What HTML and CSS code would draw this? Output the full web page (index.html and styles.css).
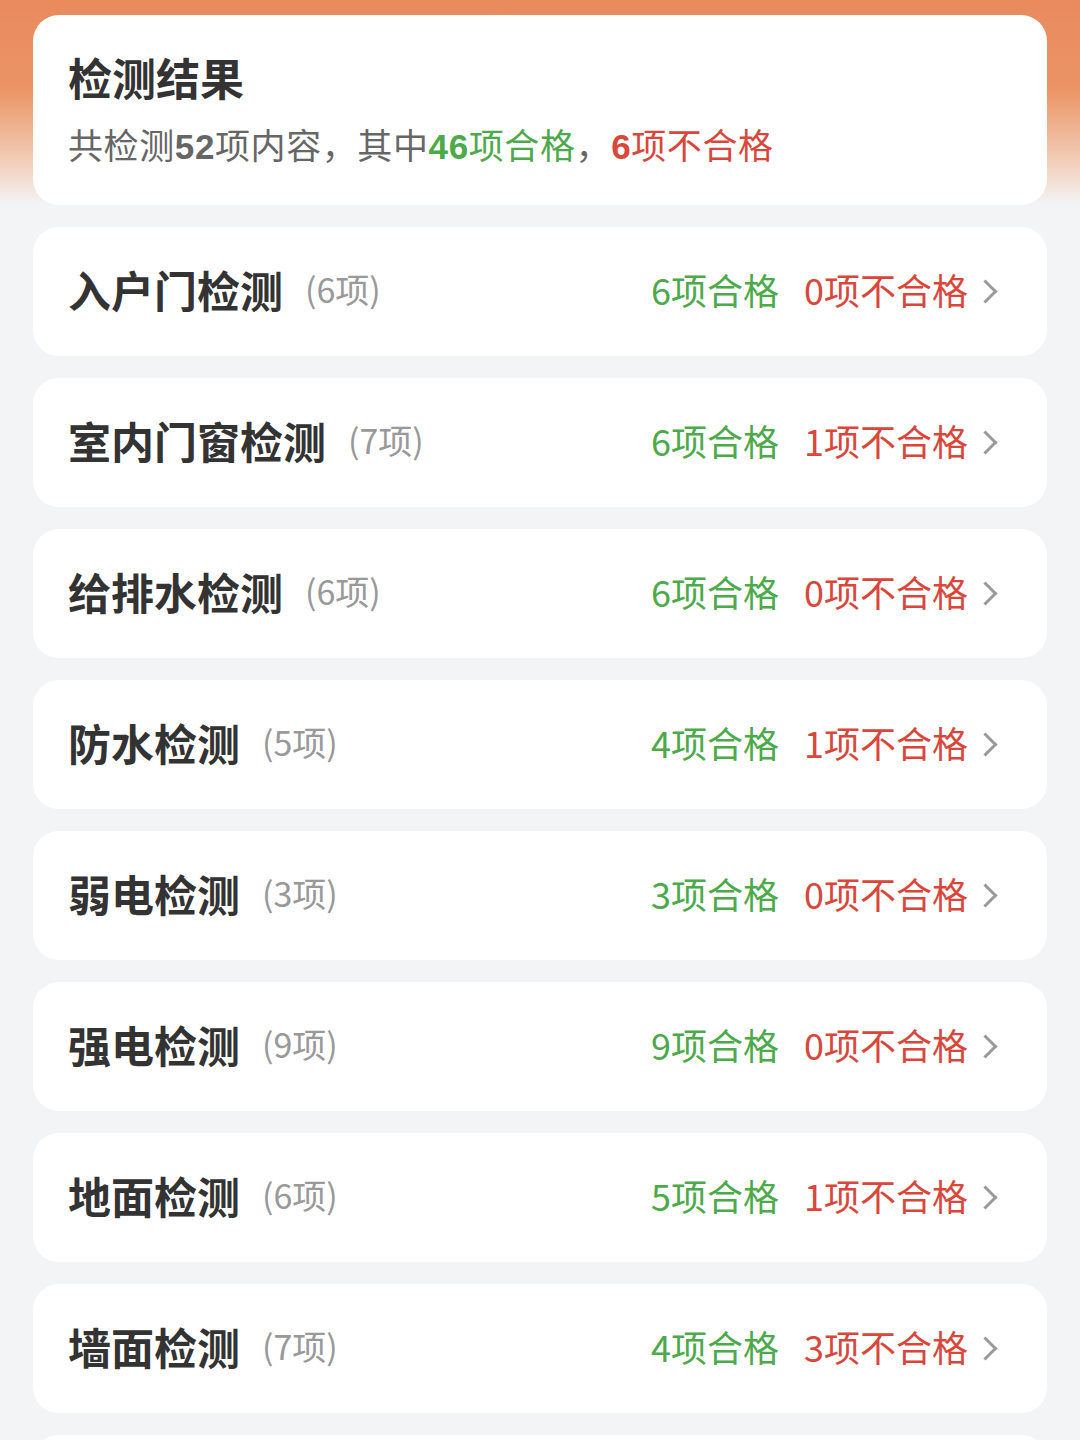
FILE: index.html
```html
<!DOCTYPE html>
<html>
<head>
	<meta charset="utf-8">
	<title>检测结果</title>
	<link rel="stylesheet" href="styles.css">
</head>
<body>
	<div class="page">
		<div class="summary">
			<h1 class="summary-title">检测结果</h1>
			<p class="summary-text">共检测<b>52</b>项内容，其中<span class="ok"><b>46</b>项合格</span>，<span class="bad"><b>6</b>项不合格</span></p>
		</div>

		<div class="item">
			<div class="item-name">入户门检测<span class="item-count">(6项)</span></div>
			<div class="item-result"><span class="ok">6项合格</span><span class="bad">0项不合格</span><span class="arrow"></span></div>
		</div>
		<div class="item">
			<div class="item-name">室内门窗检测<span class="item-count">(7项)</span></div>
			<div class="item-result"><span class="ok">6项合格</span><span class="bad">1项不合格</span><span class="arrow"></span></div>
		</div>
		<div class="item">
			<div class="item-name">给排水检测<span class="item-count">(6项)</span></div>
			<div class="item-result"><span class="ok">6项合格</span><span class="bad">0项不合格</span><span class="arrow"></span></div>
		</div>
		<div class="item">
			<div class="item-name">防水检测<span class="item-count">(5项)</span></div>
			<div class="item-result"><span class="ok">4项合格</span><span class="bad">1项不合格</span><span class="arrow"></span></div>
		</div>
		<div class="item">
			<div class="item-name">弱电检测<span class="item-count">(3项)</span></div>
			<div class="item-result"><span class="ok">3项合格</span><span class="bad">0项不合格</span><span class="arrow"></span></div>
		</div>
		<div class="item">
			<div class="item-name">强电检测<span class="item-count">(9项)</span></div>
			<div class="item-result"><span class="ok">9项合格</span><span class="bad">0项不合格</span><span class="arrow"></span></div>
		</div>
		<div class="item">
			<div class="item-name">地面检测<span class="item-count">(6项)</span></div>
			<div class="item-result"><span class="ok">5项合格</span><span class="bad">1项不合格</span><span class="arrow"></span></div>
		</div>
		<div class="item">
			<div class="item-name">墙面检测<span class="item-count">(7项)</span></div>
			<div class="item-result"><span class="ok">4项合格</span><span class="bad">3项不合格</span><span class="arrow"></span></div>
		</div>
		<!-- next card only peeks in at the bottom edge -->
		<div class="item"></div>
	</div>
</body>
</html>
```

FILE: styles.css
```css
*{
	padding: 0;
	margin: 0;
	box-sizing: border-box;
}
html{
	background-color: #f3f4f6;
}
body{
	font-family: "Noto Sans CJK SC", "Noto Sans", sans-serif;
	background: linear-gradient(180deg, #e98a5d 0, #ec9466 90px, #f2cdb6 160px, #f3f4f6 205px) no-repeat;
	background-color: #f3f4f6;
	height: 1440px;
	overflow: hidden;
}
.page{
	padding: 15px 33px 0;
	display: flex;
	flex-direction: column;
	gap: 22px;
}
.summary{
	background-color: #fff;
	border-radius: 26px;
	height: 190px;
	padding: 30px 35px 0;
}
.summary-title{
	font-size: 44px;
	font-weight: bold;
	color: #333;
	line-height: 64px;
}
.summary-text{
	margin-top: 3px;
	font-size: 35px;
	letter-spacing: 0.6px;
	color: #666;
	line-height: 64px;
}
.summary-text b{
	font-family: "Liberation Sans", "Noto Sans CJK SC", sans-serif;
	font-weight: bold;
}
.ok{
	color: #4caa4a;
}
.bad{
	color: #d9473b;
}
.item{
	flex-shrink: 0;
	background-color: #fff;
	border-radius: 26px;
	height: 129px;
	padding: 0 53px 6px 35px;
	display: flex;
	align-items: center;
	justify-content: space-between;
}
.item-name{
	font-size: 43px;
	font-weight: bold;
	color: #333;
	display: flex;
	align-items: center;
}
.item-count{
	font-size: 34px;
	font-weight: normal;
	color: #999;
	margin-left: 22px;
}
.item-result{
	font-size: 36px;
	display: flex;
	align-items: center;
}
.item-result .bad{
	margin-left: 25px;
}
.arrow{
	width: 17px;
	height: 17px;
	border-top: 3px solid #999;
	border-right: 3px solid #999;
	transform: rotate(45deg);
	margin: 5px 0 0 9px;
}
```
